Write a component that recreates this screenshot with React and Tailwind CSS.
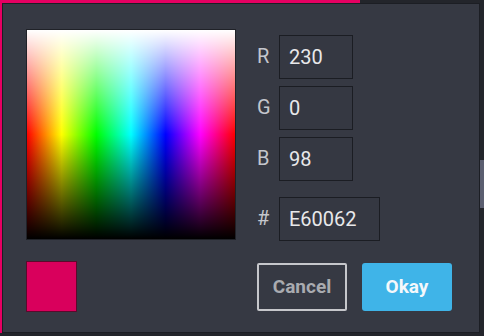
import React, { useState } from 'react';

const Field = ({ label, value, wide, className = '' }) => (
	<div className={`flex items-center ${className}`}>
		<span className="w-[22px] -mt-[3px] text-[20px] text-[#c4c6cc]">{label}</span>
		<div
			className={`h-[44px] ${wide ? 'w-[101px]' : 'w-[74px]'} flex items-center border border-[#1b1d23] bg-[#353842] pl-[9px] text-[20px] text-[#e8e8ea]`}>
			{value}
		</div>
	</div>
);

const App = () => {
	const [color] = useState({ r: 230, g: 0, b: 98, hex: 'E60062' });

	return (
		<div className="relative w-[484px] h-[336px] overflow-hidden bg-[#23252b] font-['Roboto',sans-serif]">
			{/* background app behind the dialog */}
			<div className="h-[333px] w-[360px] bg-[#e60062]"></div>
			<div className="absolute right-0 top-[160px] h-[48px] w-[4px] bg-[#5b5e70]"></div>

			{/* Color picker dialog */}
			<div className="absolute left-[2px] top-[3px] w-[478px] h-[330px] border border-[#1c1e24] bg-[#363943] pl-[23px] pt-[25px]">
				<div className="flex">
					<div className="h-[211px] w-[210px] border border-[#202228] bg-[linear-gradient(to_bottom,#fff_0%,rgba(255,255,255,0)_50%,rgba(0,0,0,0)_50%,#000_100%),linear-gradient(to_right,#f00,#ff0,#0f0,#0ff,#00f,#f0f,#f00)]"></div>
					<div className="ml-[21px] mt-[6px] flex flex-col">
						<Field label="R" value={color.r} />
						<Field label="G" value={color.g} className="mt-[7px]" />
						<Field label="B" value={color.b} className="mt-[7px]" />
						<Field label="#" value={color.hex} wide className="mt-[16px]" />
					</div>
				</div>
				<div className="mt-[20px] flex items-start">
					<div className="h-[51px] w-[51px] border border-[#5a0a2c] bg-[#d9005c]"></div>
					<button className="ml-[180px] mt-[2px] h-[48px] w-[90px] rounded-[2px] border-2 border-[#c6c7cb] text-[19px] font-bold text-[#a9abb0]">
						Cancel
					</button>
					<button className="ml-[15px] mt-[2px] h-[48px] w-[90px] rounded-[3px] bg-[#3fb4e8] text-[19px] font-bold text-[#f4f8fb]">
						Okay
					</button>
				</div>
			</div>
		</div>
	);
};

export default App;
